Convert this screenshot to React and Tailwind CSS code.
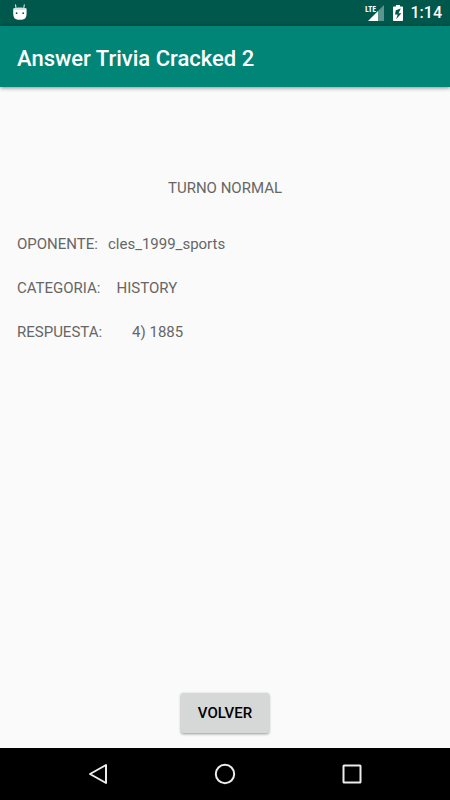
import React from 'react';

const details = [
  { label: 'OPONENTE:', value: 'cles_1999_sports', gap: 'gap-[10px]' },
  { label: 'CATEGORIA:', value: 'HISTORY', gap: 'gap-4' },
  { label: 'RESPUESTA:', value: '4) 1885', gap: 'gap-[30px]' },
];

const StatusBar = () => (
  <div className="flex h-[26px] items-center justify-between bg-[#00574b] pl-3 pr-2 text-white">
    <svg viewBox="0 0 16 18" className="h-[18px] w-4" aria-hidden="true">
      <path d="M3.5 .8l.6 3.6M12.3 .8l-.6 3.6" stroke="#cfe3df" strokeWidth="1.1" strokeLinecap="round" />
      <path
        d="M1.5 4.5C3.3 3.9 5.200 3.700 7.900 3.700s4.600.2 6.400.8c.2 1.300.3 2.600.3 4 0 3.200-.5 5-1.500 6-1.100.9-2.900 1.300-5.200 1.300s-4.100-.4-5.200-1.300c-1-1-1.500-2.800-1.500-6 0-1.400.1-2.700.3-4z"
        fill="#fff"
      />
      <path d="M1.5 4.5C3.3 3.9 5.2 3.7 7.9 3.7s4.600.2 6.400.8l.3 1.500H1.300z" fill="#d5e7e3" />
      <circle cx="4.6" cy="9.2" r=".9" fill="#00574b" />
      <circle cx="11.2" cy="9.2" r=".9" fill="#00574b" />
    </svg>

    <div className="flex items-center gap-2">
      <svg viewBox="0 0 20 18" className="h-[18px] w-5 overflow-visible" role="img" aria-label="LTE">
        <path d="M19 1v16h-6V7z" fill="#5c958c" />
        <path d="M13 7v10H3z" fill="#fff" />
        <text
          x="0"
          y="8"
          fontFamily="Open Sans Condensed, Roboto Condensed, Roboto, sans-serif"
          fontSize="9"
          fontWeight="700"
          fill="#fff"
          stroke="#00574b"
          strokeWidth="1"
          paintOrder="stroke"
        >
          LTE
        </text>
      </svg>
      <svg viewBox="0 0 10 16" className="h-4 w-[10px]" aria-hidden="true">
        <path d="M3 0h4v1.6H9c.6 0 1 .4 1 1V15c0 .6-.4 1-1 1H1c-.6 0-1-.4-1-1V2.6c0-.6.4-1 1-1h2z" fill="#fff" />
        <path d="M7.8 3.5L2.8 5.3 2 9.4h2.7l-1.6 4.8 5.3-6H5.5z" fill="#00574b" />
      </svg>
      <span className="text-[16px] leading-5 font-medium">1:14</span>
    </div>
  </div>
);

const NavigationBar = () => (
  <nav className="flex h-[52px] items-center justify-center gap-[103px] bg-black text-[#ececec]">
    <button type="button" aria-label="Back">
      <svg viewBox="0 0 24 24" className="size-6" fill="none" stroke="currentColor" strokeWidth="2" strokeLinejoin="round">
        <path d="M20 3v18L4 12z" />
      </svg>
    </button>
    <button type="button" aria-label="Home">
      <svg viewBox="0 0 24 24" className="size-6" fill="none" stroke="currentColor" strokeWidth="2">
        <circle cx="12" cy="12" r="9.2" />
      </svg>
    </button>
    <button type="button" aria-label="Recent apps">
      <svg viewBox="0 0 24 24" className="size-6" fill="none" stroke="currentColor" strokeWidth="2" strokeLinejoin="round">
        <rect x="3.5" y="3.5" width="17" height="17" rx=".5" />
      </svg>
    </button>
  </nav>
);

const App = () => {
  return (
    <div className="flex min-h-screen flex-col bg-[#fafafa] font-[Roboto,sans-serif]">
      <StatusBar />
      <header className="flex h-[61px] items-center bg-[#008577] px-[17px] shadow-[0_1px_4px_rgba(0,0,0,0.45)]">
        <h1 className="pt-1 text-[22px] leading-7 font-medium text-white">Answer Trivia Cracked 2</h1>
      </header>

      <main className="flex flex-1 flex-col px-[17px] pt-[91px] pb-[15px] text-[15px] leading-5 text-[#666666]">
        <p className="text-center">TURNO NORMAL</p>
        <dl className="mt-9 flex flex-col gap-6">
          {details.map(({ label, value, gap }) => (
            <div key={label} className={`flex ${gap}`}>
              <dt>{label}</dt>
              <dd>{value}</dd>
            </div>
          ))}
        </dl>
        <button
          type="button"
          className="mt-auto h-10 w-[88px] self-center rounded-xs bg-[#d6d7d7] font-medium text-black shadow-[0_1px_3px_rgba(0,0,0,0.4)]"
        >
          VOLVER
        </button>
      </main>
      <NavigationBar />
    </div>
  );
};

export default App;
